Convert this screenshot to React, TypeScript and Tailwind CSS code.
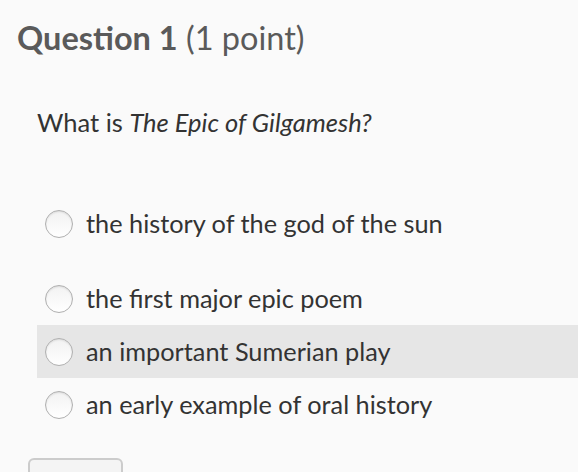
import React from 'react';

const options = [
  'the history of the god of the sun',
  'the first major epic poem',
  'an important Sumerian play',
  'an early example of oral history',
];

const Radio: React.FC = () => (
  <span className="block h-[28px] w-[28px] shrink-0 rounded-full border border-[#b0b0b0] bg-gradient-to-b from-[#f2f2f2] to-white shadow-[inset_0_1px_2px_rgba(0,0,0,0.1)]" />
);

const App: React.FC = () => {
  return (
    <div className="h-[472px] w-[578px] overflow-hidden bg-[#fafafa]">
      <h1
        className="pl-[17px] pt-[16px] text-[32.5px] leading-[44px] text-[#5a5a5a]"
        style={{ fontFamily: 'Lato, sans-serif' }}
      >
        <span className="font-bold">Question 1</span> (1 point)
      </h1>
      <div style={{ fontFamily: 'Lato, "Noto Sans", sans-serif' }}>
        <p className="pl-[37px] pt-[47px] text-[25.5px] leading-[30px] text-[#333333]">
          What is <em>The Epic of Gilgamesh?</em>
        </p>
        <div className="mt-[60px]">
          {options.map((opt, i) => (
            <label
              key={opt}
              className={`ml-[37px] flex h-[53px] items-center gap-[13px] pl-[8px] text-[25.3px] text-[#333333] ${
                i === 0 ? 'mb-[22px]' : ''
              } ${i === 2 ? 'bg-[#e6e6e6]' : ''}`}
            >
              <Radio />
              <span>{opt}</span>
            </label>
          ))}
        </div>
      </div>
      <div className="ml-[28px] mt-[27px] h-[40px] w-[95px] rounded-[6px] border-2 border-[#cccccc] bg-[#f4f4f4]" />
    </div>
  );
};

export default App;
